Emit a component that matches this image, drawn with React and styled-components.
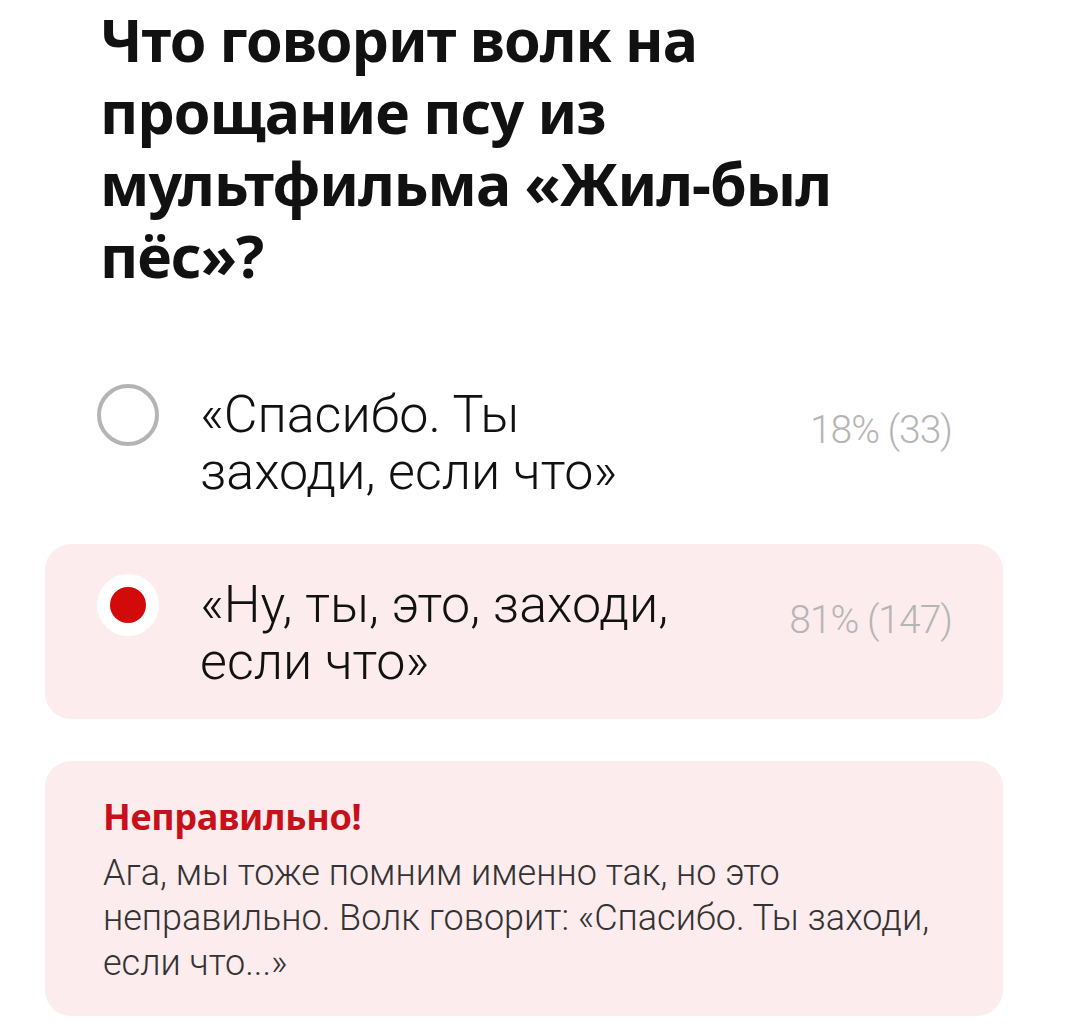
import React from "react";
import styled, { createGlobalStyle } from "styled-components";

const GlobalStyle = createGlobalStyle`
  body {
    margin: 0;
    background: #ffffff;
    font-family: "Roboto", "Noto Sans", sans-serif;
  }
`;

const Page = styled.div`
  width: 958px;
  margin-left: 45px;
  padding-bottom: 12px;
`;

const Question = styled.h1`
  margin: 0;
  padding: 3px 0 0 55px;
  max-width: 775px;
  font-family: "Noto Sans", sans-serif;
  font-weight: 700;
  font-size: 59px;
  line-height: 72px;
  letter-spacing: -1px;
  color: #111;
`;

const Options = styled.div`
  margin-top: 63px;
  display: flex;
  flex-direction: column;
  gap: 15px;
`;

const OptionRow = styled.div`
  display: flex;
  align-items: flex-start;
  padding: 32px 51px 29px 52px;
  border-radius: 26px;
  background: ${(p) => (p.selected ? "#fdeced" : "transparent")};
`;

const Radio = styled.span`
  flex: none;
  box-sizing: border-box;
  width: 62px;
  height: 62px;
  margin-top: -2px;
  border-radius: 50%;
  display: flex;
  align-items: center;
  justify-content: center;
  background: #fff;
  border: ${(p) => (p.checked ? "none" : "4px solid #b4b4b4")};

  &::after {
    content: "";
    display: ${(p) => (p.checked ? "block" : "none")};
    width: 36px;
    height: 36px;
    border-radius: 50%;
    background: #d20a0a;
  }
`;

const OptionText = styled.div`
  flex: 1;
  margin-left: 41px;
  font-family: "Roboto", sans-serif;
  font-weight: 300;
  font-size: 52px;
  line-height: 57px;
  color: #111;
  max-width: 485px;
`;

const Percent = styled.div`
  margin-left: auto;
  margin-top: 24px;
  font-family: "Roboto", sans-serif;
  font-weight: 300;
  font-size: 39px;
  line-height: 40px;
  letter-spacing: -1px;
  color: #b5b5b5;
  white-space: nowrap;
`;

const Feedback = styled.div`
  margin-top: 42px;
  padding: 34px 58px 30px;
  border-radius: 26px;
  background: #fdeced;
`;

const Verdict = styled.div`
  font-family: "Noto Sans", sans-serif;
  font-weight: 700;
  font-size: 36px;
  line-height: 44px;
  letter-spacing: -0.3px;
  color: #c8101a;
`;

const Explanation = styled.p`
  margin: 12px 0 0;
  max-width: 850px;
  font-family: "Roboto", sans-serif;
  font-weight: 300;
  font-size: 36px;
  line-height: 45px;
  color: #333;
`;

const options = [
  { text: "«Спасибо. Ты заходи, если что»", stat: "18% (33)", picked: false },
  { text: "«Ну, ты, это, заходи, если что»", stat: "81% (147)", picked: true },
];

export default function App() {
  return (
    <>
      <GlobalStyle />
      <Page>
        <Question>
          Что говорит волк на прощание псу из мультфильма «Жил-был пёс»?
        </Question>
        <Options>
          {options.map((o) => (
            <OptionRow key={o.stat} selected={o.picked}>
              <Radio checked={o.picked} />
              <OptionText>{o.text}</OptionText>
              <Percent>{o.stat}</Percent>
            </OptionRow>
          ))}
        </Options>
        <Feedback>
          <Verdict>Неправильно!</Verdict>
          <Explanation>
            Ага, мы тоже помним именно так, но это неправильно. Волк говорит:
            «Спасибо. Ты заходи, если что...»
          </Explanation>
        </Feedback>
      </Page>
    </>
  );
}
